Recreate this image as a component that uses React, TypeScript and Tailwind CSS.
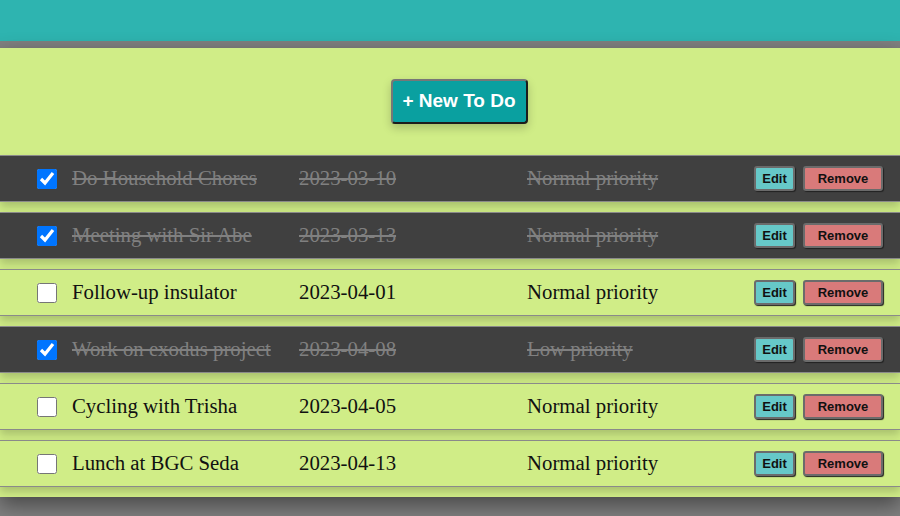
import React from "react";

type Todo = { title: string; date: string; priority: string; done: boolean };

const todos: Todo[] = [
  { title: "Do Household Chores", date: "2023-03-10", priority: "Normal priority", done: true },
  { title: "Meeting with Sir Abe", date: "2023-03-13", priority: "Normal priority", done: true },
  { title: "Follow-up insulator", date: "2023-04-01", priority: "Normal priority", done: false },
  { title: "Work on exodus project", date: "2023-04-08", priority: "Low priority", done: true },
  { title: "Cycling with Trisha", date: "2023-04-05", priority: "Normal priority", done: false },
  { title: "Lunch at BGC Seda", date: "2023-04-13", priority: "Normal priority", done: false },
];

function Row({ t }: { t: Todo }) {
  const textCls = t.done ? "text-[#808080] line-through" : "text-[#111]";
  return (
    <div
      className={`flex h-[47px] items-center border-y border-[#8a8a8a] shadow-[0_5px_8px_rgba(0,0,0,0.18)] ${
        t.done ? "bg-[#404040]" : "bg-[#d0ed87]"
      }`}
    >
      <input
        type="checkbox"
        checked={t.done}
        readOnly
        className="ml-[37px] h-5 w-5 shrink-0"
      />
      <div
        className={`ml-[15px] flex flex-1 items-center text-[20.8px] leading-none ${textCls}`}
        style={{ fontFamily: '"Liberation Serif", "Times New Roman", serif' }}
      >
        <span className="w-[227px] whitespace-nowrap">{t.title}</span>
        <span className="w-[228px] whitespace-nowrap">{t.date}</span>
        <span className="flex-1 whitespace-nowrap">{t.priority}</span>
      </div>
      <div
        className="mr-[17px] flex items-center gap-2 text-[13px] font-bold text-[#111]"
        style={{ fontFamily: '"Liberation Sans", Arial, sans-serif' }}
      >
        <button className="h-[25px] w-[41px] rounded-[3px] border-2 border-[#6b6b6b] bg-[#66c8c8] shadow-[1px_1px_1px_#222]">
          Edit
        </button>
        <button className="h-[25px] w-[80px] rounded-[3px] border-2 border-[#6b6b6b] bg-[#d97a7a] shadow-[1px_1px_1px_#222]">
          Remove
        </button>
      </div>
    </div>
  );
}

export default function App() {
  return (
    <div className="min-h-[516px] bg-[#808080]">
      <div className="h-[41px] bg-[#2eb4b0]" />
      <div className="mt-[7px] bg-[#d0ed87] pb-[10px] shadow-[0_8px_20px_rgba(0,0,0,0.45)]">
        <div className="flex justify-center py-[31px]">
          <button
            className="ml-[18px] h-[45px] w-[137px] rounded-[4px] border-2 border-t-[#777] border-l-[#777] border-b-[#1c1c1c] border-r-[#1c1c1c] bg-[#0aa0a0] text-[19px] font-bold text-white shadow-[0_4px_10px_rgba(0,0,0,0.2)]"
            style={{ fontFamily: '"Liberation Sans", Arial, sans-serif' }}
          >
            + New To Do
          </button>
        </div>
        <div className="flex flex-col gap-[10px]">
          {todos.map((t) => (
            <Row key={t.title} t={t} />
          ))}
        </div>
      </div>
    </div>
  );
}
